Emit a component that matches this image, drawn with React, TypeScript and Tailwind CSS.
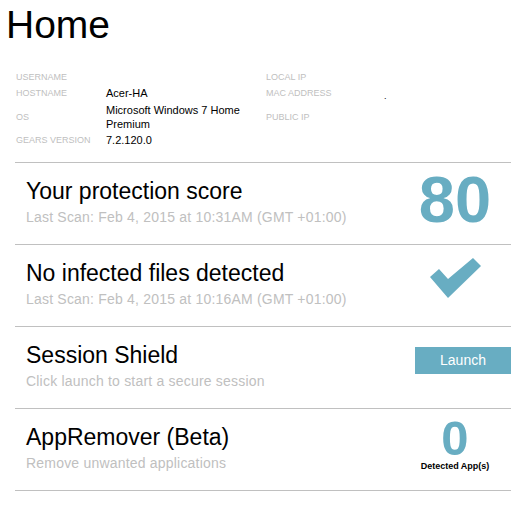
const info = [
  { label: "USERNAME", value: [] as string[], right: "LOCAL IP", h: "h-[16px]" },
  { label: "HOSTNAME", value: ["Acer-HA"], right: "MAC ADDRESS", h: "h-[16px]" },
  { label: "OS", value: ["Microsoft Windows 7 Home", "Premium"], right: "PUBLIC IP", h: "h-[32px]" },
  { label: "GEARS VERSION", value: ["7.2.120.0"], right: "", h: "h-[14px]" },
];

function Row({
  title,
  subtitle,
  children,
}: {
  title: string;
  subtitle: string;
  children: React.ReactNode;
}) {
  return (
    <div className="flex h-[82px] border-b border-[#c0c0c0]">
      <div className="flex-1 pl-[11px] pt-[15px]">
        <p className="text-[23px] leading-[26px] text-black">{title}</p>
        <p className="mt-[5px] text-[14px] leading-[16px] tracking-[0.2px] text-[#c0c0c0]">{subtitle}</p>
      </div>
      <div className="flex w-[112px] shrink-0 flex-col items-center">{children}</div>
    </div>
  );
}

export default function App() {
  return (
    <div className="min-h-[511px] w-[511px] overflow-hidden bg-white font-['Liberation_Sans',Arial,sans-serif]">
      <h1 className="ml-[6px] mt-[5px] text-[39px] leading-none text-black">Home</h1>

      <div className="mt-[25px] pl-[16px]">
        {info.map((row) => (
          <div key={row.label} className={`grid grid-cols-[90px_160px_118px_1fr] items-center ${row.h}`}>
            <span className="text-[9px] leading-none text-[#c0c0c0]">{row.label}</span>
            <div className="text-[11px] leading-[14px] text-black">
              {row.value.map((v) => (
                <div key={v}>{v}</div>
              ))}
            </div>
            <span className="text-[9px] leading-none text-[#c0c0c0]">{row.right}</span>
            <span className="mt-[6px] text-[9px] leading-none text-black">
              {row.right === "MAC ADDRESS" ? "." : ""}
            </span>
          </div>
        ))}
      </div>

      <div className="ml-[15px] mt-[15px] border-t border-[#c0c0c0]">
        <Row title="Your protection score" subtitle="Last Scan: Feb 4, 2015 at 10:31AM (GMT +01:00)">
          <span className="mt-[4px] text-[65px] font-bold leading-none text-[#68adc2]">80</span>
        </Row>
        <Row title="No infected files detected" subtitle="Last Scan: Feb 4, 2015 at 10:16AM (GMT +01:00)">
          <svg width="51" height="40" viewBox="0 0 51 40" className="mt-[13px]">
            <polygon points="0,19 9,11 18,21 43,0 51,8 18,40" fill="#68adc2" />
          </svg>
        </Row>
        <Row title="Session Shield" subtitle="Click launch to start a secure session">
          <button
            type="button"
            className="mt-[20px] h-[27px] w-[96px] self-end bg-[#68adc2] text-[14px] text-white"
          >
            Launch
          </button>
        </Row>
        <Row title="AppRemover (Beta)" subtitle="Remove unwanted applications">
          <span className="mt-[11px] h-[36px] text-[49px] font-bold leading-[36px] text-[#68adc2]">0</span>
          <span className="mt-[6px] text-[9px] font-bold leading-none text-black">Detected App(s)</span>
        </Row>
      </div>
    </div>
  );
}
